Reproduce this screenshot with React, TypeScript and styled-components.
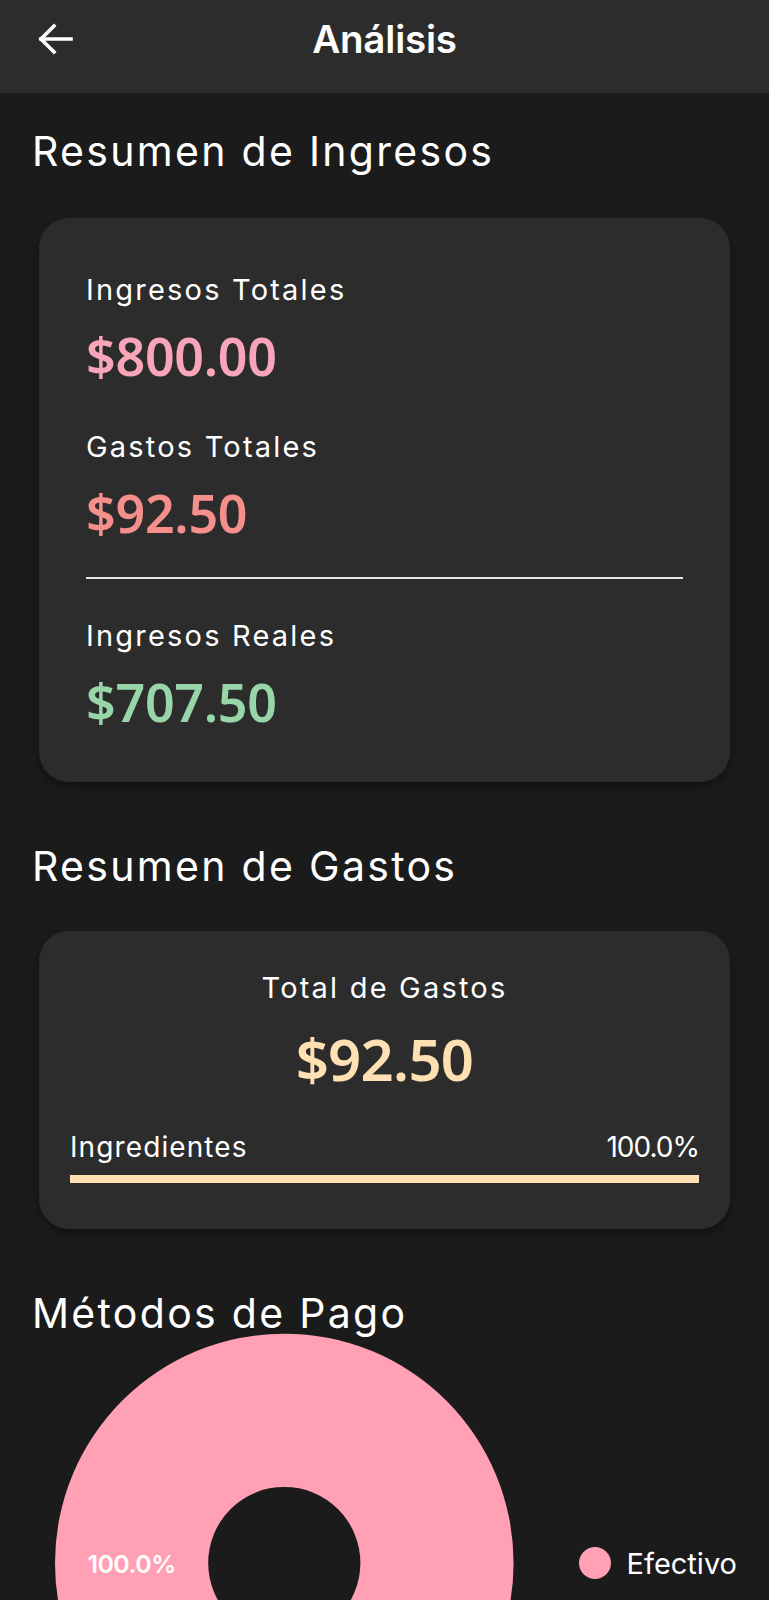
import React from "react";
import styled, { createGlobalStyle } from "styled-components";

const GlobalStyle = createGlobalStyle`
  html, body {
    margin: 0;
    padding: 0;
    background: #1b1b1b;
  }
  * { box-sizing: border-box; }
`;

const FONT = `Inter, "Noto Sans", sans-serif`;
const NUM_FONT = `"Noto Sans", Inter, sans-serif`;

const Page = styled.div`
  height: 1600px;
  overflow: hidden;
  background: #1b1b1b;
  color: #ffffff;
  font-family: ${FONT};
`;

const Header = styled.header`
  height: 93px;
  padding-bottom: 15px;
  background: #2c2c2c;
  display: grid;
  grid-template-columns: 1fr auto 1fr;
  align-items: center;
`;

const BackButton = styled.button`
  justify-self: start;
  margin-left: 37px;
  padding: 0;
  border: none;
  background: transparent;
  display: flex;
  color: #ffffff;
`;

const Title = styled.h1`
  margin: 0;
  font-size: 38.5px;
  line-height: 1;
  font-weight: 600;
  letter-spacing: -0.2px;
`;

const Content = styled.main`
  padding: 0 32px;
`;

const SectionTitle = styled.h2<{ $top: number }>`
  margin: ${(p) => p.$top}px 0 0;
  font-size: 41px;
  line-height: 1;
  font-weight: 400;
  letter-spacing: 2.3px;
`;

const Card = styled.section<{ $pad: string; $top: number }>`
  margin: ${(p) => p.$top}px 7px 0;
  padding: ${(p) => p.$pad};
  background: #2c2c2c;
  border-radius: 30px;
  box-shadow: 0 5px 10px rgba(0, 0, 0, 0.35);
  display: flex;
  flex-direction: column;
`;

const Stat = styled.div<{ $top: number }>`
  margin-top: ${(p) => p.$top}px;
  display: flex;
  flex-direction: column;
  gap: 26px;
`;

const Label = styled.div<{ $center?: boolean }>`
  font-size: 29px;
  line-height: 1;
  font-weight: 400;
  letter-spacing: 2.2px;
  text-align: ${(p) => (p.$center ? "center" : "left")};
`;

const Value = styled.div<{ $color: string; $center?: boolean; $top?: number; $size?: number; $spacing?: number }>`
  margin-top: ${(p) => p.$top ?? 0}px;
  font-family: ${NUM_FONT};
  font-size: ${(p) => p.$size ?? 52}px;
  line-height: 1;
  font-weight: 600;
  letter-spacing: ${(p) => p.$spacing ?? -0.3}px;
  color: ${(p) => p.$color};
  text-align: ${(p) => (p.$center ? "center" : "left")};
`;

const Divider = styled.hr`
  margin: 38px 0 0;
  border: none;
  height: 2px;
  background: #e6e6e6;
`;

const CategoryRow = styled.div`
  margin-top: 45px;
  display: flex;
  justify-content: space-between;
  align-items: baseline;
  font-size: 28px;
  line-height: 1;
`;

const CategoryName = styled.span`
  letter-spacing: 1.1px;
`;

const Percent = styled.span`
  letter-spacing: -1px;
`;

const Track = styled.div`
  margin-top: 14px;
  height: 8px;
  background: #3a3a3a;
`;

const Fill = styled.div`
  height: 100%;
  background: #ffe0b2;
`;

const ChartRow = styled.div`
  margin-top: -6px;
  padding-left: 23px;
  display: flex;
  align-items: center;
`;

const Legend = styled.div`
  margin-left: 65px;
  display: flex;
  align-items: center;
  gap: 16px;
  font-size: 29px;
  line-height: 1;
  letter-spacing: 0px;
`;

const Dot = styled.span<{ $color: string }>`
  width: 32px;
  height: 32px;
  border-radius: 50%;
  background: ${(p) => p.$color};
`;

const PINK = "#ffa0b5";

function Donut() {
  const size = 470;
  const c = size / 2;
  const R = 235;
  const r = 78;
  const mid = (R + r) / 2;
  return (
    <svg width={size} height={size} viewBox={`0 0 ${size} ${size}`}>
      <path
        d={`M ${c - R} ${c} A ${R} ${R} 0 1 0 ${c + R} ${c} A ${R} ${R} 0 1 0 ${c - R} ${c} Z M ${c - r} ${c} A ${r} ${r} 0 1 1 ${c + r} ${c} A ${r} ${r} 0 1 1 ${c - r} ${c} Z`}
        fill={PINK}
        fillRule="evenodd"
      />
      <text
        x={c - mid}
        y={c + 1}
        fill="#ffffff"
        fontSize="25.5"
        fontWeight="600"
        fontFamily={FONT}
        textAnchor="middle"
        dominantBaseline="central"
        letterSpacing="-0.5"
      >
        100.0%
      </text>
    </svg>
  );
}

export default function App() {
  return (
    <Page>
      <GlobalStyle />
      <Header>
        <BackButton aria-label="Volver">
          <svg width="36" height="34" viewBox="0 0 36 34" fill="none" stroke="currentColor" strokeWidth="3.6" strokeLinecap="square">
            <path d="M34 17H4" />
            <path d="M17 4L4 17L17 30" strokeLinejoin="miter" />
          </svg>
        </BackButton>
        <Title>Análisis</Title>
      </Header>
      <Content>
        <SectionTitle $top={38}>Resumen de Ingresos</SectionTitle>
        <Card $top={46} $pad="57px 47px 54px">
          <Stat $top={0}>
            <Label>Ingresos Totales</Label>
            <Value $color="#f8a5ba">$800.00</Value>
          </Stat>
          <Stat $top={50}>
            <Label>Gastos Totales</Label>
            <Value $color="#f58f8b">$92.50</Value>
          </Stat>
          <Divider />
          <Stat $top={42}>
            <Label>Ingresos Reales</Label>
            <Value $color="#98d6a9">$707.50</Value>
          </Stat>
        </Card>

        <SectionTitle $top={64}>Resumen de Gastos</SectionTitle>
        <Card $top={44} $pad="42px 31px 46px">
          <Label $center>Total de Gastos</Label>
          <Value $color="#ffe0b2" $center $top={28} $size={58} $spacing={-0.7}>$92.50</Value>
          <CategoryRow>
            <CategoryName>Ingredientes</CategoryName>
            <Percent>100.0%</Percent>
          </CategoryRow>
          <Track>
            <Fill style={{ width: "100%" }} />
          </Track>
        </Card>

        <SectionTitle $top={64}>Métodos de Pago</SectionTitle>
        <ChartRow>
          <Donut />
          <Legend>
            <Dot $color={PINK} />
            <span>Efectivo</span>
          </Legend>
        </ChartRow>
      </Content>
    </Page>
  );
}
